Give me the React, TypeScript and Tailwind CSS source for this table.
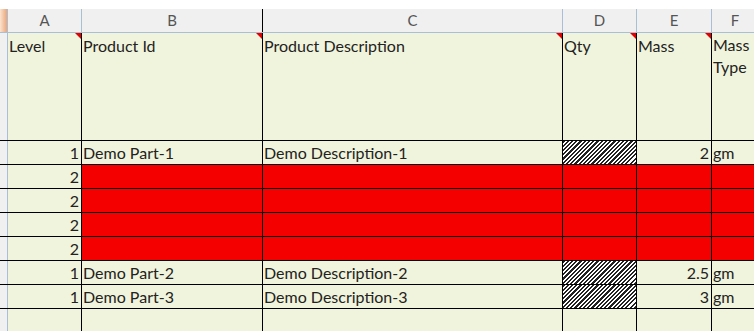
import React from "react";

type Row = { level: string; id: string; desc: string; hatch: boolean; mass: string; type: string; red: boolean };

const rows: Row[] = [
  { level: "1", id: "Demo Part-1", desc: "Demo Description-1", hatch: true, mass: "2", type: "gm", red: false },
  { level: "2", id: "", desc: "", hatch: false, mass: "", type: "", red: true },
  { level: "2", id: "", desc: "", hatch: false, mass: "", type: "", red: true },
  { level: "2", id: "", desc: "", hatch: false, mass: "", type: "", red: true },
  { level: "2", id: "", desc: "", hatch: false, mass: "", type: "", red: true },
  { level: "1", id: "Demo Part-2", desc: "Demo Description-2", hatch: true, mass: "2.5", type: "gm", red: false },
  { level: "1", id: "Demo Part-3", desc: "Demo Description-3", hatch: true, mass: "3", type: "gm", red: false },
];

const hatch =
  "bg-[repeating-linear-gradient(135deg,#222_0px,#222_1.5px,#fff_1.5px,#fff_3px)]";

const Tri = () => (
  <span className="absolute top-0 right-0 w-0 h-0 border-l-[6px] border-l-transparent border-t-[6px] border-t-[#e00000]" />
);

const App: React.FC = () => {
  const cell = "h-full border-r border-black shrink-0";
  return (
    <div className="w-[754px] h-[331px] overflow-hidden bg-white text-[16px] text-[#222] font-['Lato','Liberation_Sans',sans-serif] leading-none">
      <div className="h-[9px]" />
      {/* column letters */}
      <div className="flex h-[24px] bg-[#f0f0f0] border-b border-[#a9bfd6] text-[#555] text-[15px]">
        <div className="w-[8px] shrink-0 border-r border-[#a9bfd6] bg-[linear-gradient(90deg,#fbe3d0,#eaa679)]" />
        <div className="w-[74px] shrink-0 border-r border-[#a9bfd6] flex items-center justify-center">A</div>
        <div className="w-[181px] shrink-0 border-r border-black flex items-center justify-center">B</div>
        <div className="w-[300px] shrink-0 border-r border-[#a9bfd6] flex items-center justify-center">C</div>
        <div className="w-[74px] shrink-0 border-r border-[#a9bfd6] flex items-center justify-center">D</div>
        <div className="w-[75px] shrink-0 border-r border-[#a9bfd6] flex items-center justify-center">E</div>
        <div className="w-[60px] shrink-0 flex items-center justify-center pr-[14px]">F</div>
      </div>

      {/* header data row */}
      <div className="flex h-[108px] border-b border-black">
        <div className="w-[8px] shrink-0 bg-[#f0f0f0] border-r border-[#a9bfd6]" />
        <div className={`${cell} w-[74px] bg-[#f1f4dc] relative pl-[1px] pt-[5px]`}>Level<Tri /></div>
        <div className={`${cell} w-[181px] bg-[#f1f4dc] relative pl-[1px] pt-[5px]`}>Product Id<Tri /></div>
        <div className={`${cell} w-[300px] bg-[#f1f4dc] relative pl-[1px] pt-[5px]`}>Product Description<Tri /></div>
        <div className={`${cell} w-[74px] bg-[#f1f4dc] relative pl-[1px] pt-[5px]`}>Qty<Tri /></div>
        <div className={`${cell} w-[75px] bg-[#f1f4dc] relative pl-[1px] pt-[5px]`}>Mass<Tri /></div>
        <div className="h-full w-[60px] shrink-0 bg-[#f1f4dc] pl-[1px] pt-[5px] leading-[22px]">
          <div className="-mt-[4px]">Mass</div>
          <div>Type</div>
        </div>
      </div>

      {rows.map((r, i) => {
        const bg = r.red ? "bg-[#f50000]" : "bg-[#f1f4dc]";
        return (
          <div key={i} className="flex h-[24px] border-b border-black">
            <div className="w-[8px] shrink-0 bg-[#f0f0f0] border-r border-[#a9bfd6]" />
            <div className={`${cell} w-[74px] bg-[#f1f4dc] flex items-end justify-end pr-[2px] pb-[3px]`}>{r.level}</div>
            <div className={`${cell} w-[181px] ${bg} flex items-end pl-[1px] pb-[3px]`}>{r.id}</div>
            <div className={`${cell} w-[300px] ${bg} flex items-end pl-[1px] pb-[3px]`}>{r.desc}</div>
            <div className={`${cell} w-[74px] ${r.hatch ? hatch : bg}`} />
            <div className={`${cell} w-[75px] ${bg} flex items-end justify-end pr-[2px] pb-[3px]`}>{r.mass}</div>
            <div className={`h-full w-[60px] shrink-0 ${bg} flex items-end pl-[1px] pb-[3px]`}>{r.type}</div>
          </div>
        );
      })}

      <div className="flex h-[30px]">
        <div className="w-[8px] shrink-0 bg-[#f0f0f0] border-r border-[#a9bfd6]" />
        <div className={`${cell} w-[74px] bg-[#f1f4dc]`} />
        <div className={`${cell} w-[181px] bg-[#f1f4dc]`} />
        <div className={`${cell} w-[300px] bg-[#f1f4dc]`} />
        <div className={`${cell} w-[74px] bg-[#f1f4dc]`} />
        <div className={`${cell} w-[75px] bg-[#f1f4dc]`} />
        <div className="h-full w-[60px] shrink-0 bg-[#f1f4dc]" />
      </div>
    </div>
  );
};

export default App;
